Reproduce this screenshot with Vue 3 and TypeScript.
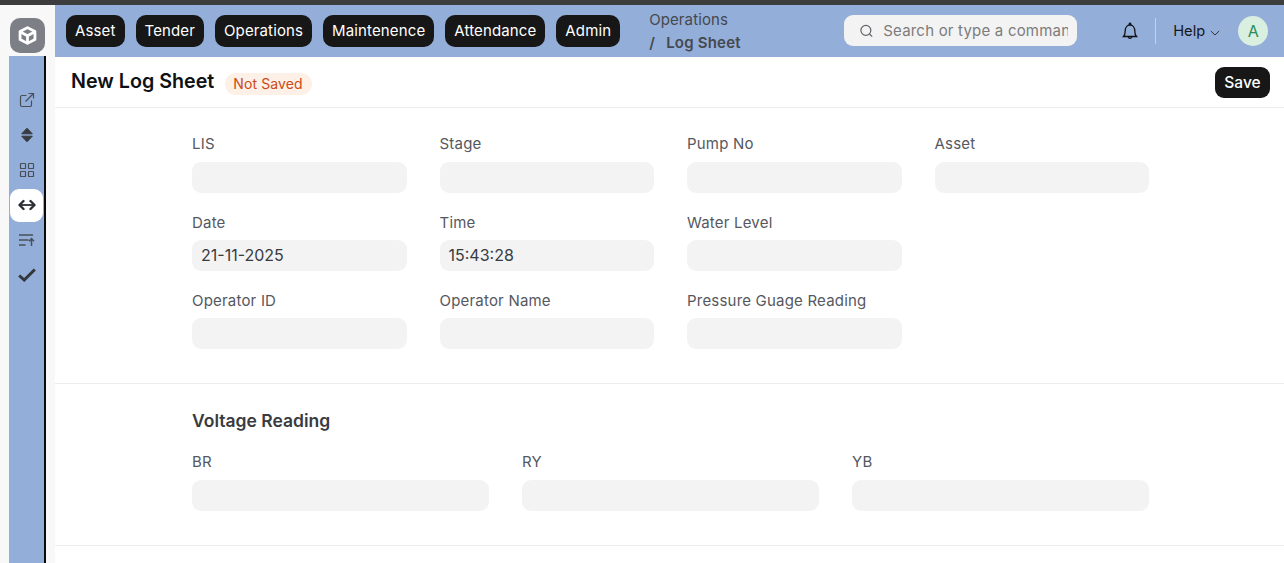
<script setup lang="ts">
interface Field { label: string; value?: string; empty?: boolean }
const menus: string[] = ['Asset', 'Tender', 'Operations', 'Maintenence', 'Attendance', 'Admin']
const rows: Field[] = [
  { label: 'LIS' }, { label: 'Stage' }, { label: 'Pump No' }, { label: 'Asset' },
  { label: 'Date', value: '21-11-2025' }, { label: 'Time', value: '15:43:28' }, { label: 'Water Level' }, { label: '', empty: true },
  { label: 'Operator ID' }, { label: 'Operator Name' }, { label: 'Pressure Guage Reading' }, { label: '', empty: true },
]
const volts: Field[] = [{ label: 'BR' }, { label: 'RY' }, { label: 'YB' }]
</script>

<template>
  <div class="page">
    <div class="topline"></div>
    <div class="shell">
      <aside class="rail">
        <div class="logo-wrap">
          <div class="logo">
            <svg width="21" height="21" viewBox="0 0 24 24" fill="none" stroke="#fff" stroke-width="3.200" stroke-linejoin="round">
              <path d="M12 3 20.500 7.500V16.500L12 21 3.500 16.500V7.500Z" />
              <path d="M4 8 12 12.300 20 8M12 12.300V20.500" />
            </svg>
          </div>
        </div>
        <div class="strip">
          <div class="strip-item">
            <svg width="16" height="16" viewBox="0 0 16 16" fill="none" stroke="#4a4f57" stroke-width="1.200">
              <path d="M12.500 8.500V13a1.500 1.500 0 0 1-1.500 1.500H3A1.500 1.500 0 0 1 1.500 13V5A1.500 1.500 0 0 1 3 3.500H7.500" />
              <path d="M6.500 9.500 14.500 1.500M9.500 1.500H14.500V6.500" />
            </svg>
          </div>
          <div class="strip-item">
            <svg width="14" height="16" viewBox="0 0 14 16" fill="#383b40" stroke="#383b40" stroke-width="1" stroke-linejoin="round">
              <path d="M7 1.200 12.300 6.800H1.700Z" />
              <path d="M7 14.800 1.700 9.200H12.300Z" />
            </svg>
          </div>
          <div class="strip-item">
            <svg width="16" height="16" viewBox="0 0 16 16" fill="none" stroke="#4a4f57" stroke-width="1.200">
              <rect x="1.500" y="1.500" width="5" height="5" rx=".6" />
              <rect x="9.500" y="1.500" width="5" height="5" rx=".6" />
              <rect x="1.500" y="9.500" width="5" height="5" rx=".6" />
              <rect x="9.500" y="9.500" width="5" height="5" rx=".6" />
            </svg>
          </div>
          <div class="strip-item active">
            <svg width="18" height="12" viewBox="0 0 18 12" fill="none" stroke="#2b2e33" stroke-linejoin="round">
              <path stroke-width="2.400" stroke-linecap="round" d="M5.500 2 1.500 6 5.500 10M12.500 2 16.500 6 12.500 10" />
              <path stroke-width="1.800" d="M2 6H16" />
            </svg>
          </div>
          <div class="strip-item">
            <svg width="16" height="14" viewBox="0 0 16 14" fill="none" stroke="#4a4f57" stroke-width="1.500">
              <path d="M0 2H14M0 7H9.500M0 12H6.500M12.500 13V6M10 8.200 12.500 5.600 15 8.200" />
            </svg>
          </div>
          <div class="strip-item">
            <svg width="18" height="14" viewBox="0 0 18 14" fill="none" stroke="#33363b" stroke-width="3">
              <path d="M1.200 7.500 6.200 12 16.800 1.500" />
            </svg>
          </div>
        </div>
      </aside>

      <div class="main">
        <header class="navbar">
          <nav class="menus">
            <button v-for="m in menus" :key="m" class="menu-btn">{{ m }}</button>
          </nav>
          <div class="crumbs">
            <div class="crumb-parent">Operations</div>
            <div class="crumb-current"><span class="slash">/</span><b>Log Sheet</b></div>
          </div>
          <div class="search">
            <svg width="16" height="16" viewBox="0 0 16 16" fill="none" stroke="#5f636a" stroke-width="1.300">
              <circle cx="7.300" cy="7.300" r="5.300" />
              <path d="M11.200 11.200 14 14" />
            </svg>
            <span class="search-text">Search or type a command</span>
          </div>
          <svg class="bell" width="20" height="20" viewBox="0 0 20 20" fill="none" stroke="#0f1114" stroke-width="1.300">
            <path d="M3.500 15.500c1.300-1.300 1.700-2.800 1.700-5.500C5.200 6.800 7 4 10 4s4.800 2.800 4.800 6c0 2.700.4 4.200 1.700 5.500Z" />
            <path d="M9.300 3.900V2.800a.7.7 0 0 1 1.400 0v1.100M8.300 15.800c.2 1 .9 1.600 1.700 1.600s1.500-.6 1.700-1.600" />
          </svg>
          <div class="divider"></div>
          <div class="help">
            <span>Help</span>
            <svg width="10" height="6" viewBox="0 0 10 6" fill="none" stroke="#33363b" stroke-width="1">
              <path d="M.8 1 5 5 9.200 1" />
            </svg>
          </div>
          <div class="avatar">A</div>
        </header>

        <div class="title-bar">
          <h1>New Log Sheet</h1>
          <span class="badge">Not Saved</span>
          <button class="save">Save</button>
        </div>

        <section class="section first">
          <div class="grid four">
            <div v-for="(f, i) in rows" :key="i" class="field">
              <template v-if="!f.empty">
                <label>{{ f.label }}</label>
                <div class="input">{{ f.value }}</div>
              </template>
            </div>
          </div>
        </section>

        <section class="section second">
          <h2>Voltage Reading</h2>
          <div class="grid three">
            <div v-for="f in volts" :key="f.label" class="field">
              <label>{{ f.label }}</label>
              <div class="input"></div>
            </div>
          </div>
        </section>
      </div>
    </div>
  </div>
</template>

<style>
html, body { margin: 0; overflow: hidden; background: #fff; }
</style>

<style scoped>
.page {
  width: 1284px;
  height: 563px;
  overflow: hidden;
  display: flex;
  flex-direction: column;
  font-family: Inter, "Liberation Sans", sans-serif;
  color: #383b40;
}
.topline { height: 5px; background: #3d3d3d; flex: none; }
.shell { display: flex; flex: 1; min-height: 0; }
.rail {
  width: 55px;
  flex: none;
  background: #f8f8f8;
  display: flex;
  flex-direction: column;
  box-sizing: border-box;
  padding-left: 9px;
}
.logo-wrap { height: 51px; flex: none; padding: 13px 0 0 1px; box-sizing: border-box; }
.logo {
  width: 35px;
  height: 35px;
  border-radius: 10px;
  background: #7c7f86;
  display: flex;
  align-items: center;
  justify-content: center;
}
.strip {
  width: 35px;
  flex: 1;
  background: #93aed9;
  border-right: 2px solid #0a0a0a;
  padding-top: 28px;
  display: flex;
  flex-direction: column;
  align-items: center;
  box-sizing: content-box;
}
.strip-item {
  width: 33px;
  height: 33px;
  margin-bottom: 2px;
  border-radius: 9px;
  display: flex;
  align-items: center;
  justify-content: center;
  flex: none;
}
.strip-item svg { margin-bottom: 2px; }
.strip-item.active svg { margin-bottom: 1px; }
.strip-item.active { background: #fff; }
.main { flex: 1; min-width: 0; background: #fff; }
.navbar {
  height: 52px;
  background: #93aed9;
  display: flex;
  align-items: center;
  padding-left: 11px;
  box-sizing: border-box;
}
.menus { display: flex; gap: 11px; flex: none; }
.menu-btn {
  height: 32px;
  border: 0;
  border-radius: 10px;
  background: #171717;
  color: #fff;
  font: 400 15px Inter, sans-serif;
  letter-spacing: .13px;
  padding: 0 9px 2px;
}
.crumbs { width: 195px; margin-left: 29px; flex: none; font-size: 15px; color: #45484e; line-height: 23px; }
.crumb-parent { letter-spacing: .1px; }
.crumb-current { display: flex; }
.slash { width: 17px; font-weight: 600; }
.crumb-current b { font-weight: 600; letter-spacing: .2px; }
.search {
  width: 233px;
  height: 31px;
  margin-top: -1px;
  flex: none;
  background: #f3f3f3;
  border-radius: 9px;
  display: flex;
  align-items: center;
  padding: 0 9px 0 15px;
  box-sizing: border-box;
  overflow: hidden;
}
.search-text {
  margin-left: 9px;
  font-size: 15px;
  letter-spacing: .2px;
  color: #7c7c7c;
  white-space: nowrap;
  overflow: hidden;
}
.bell { margin-left: 43px; flex: none; }
.divider { width: 1px; height: 26px; background: #c5d3ea; margin-left: 15px; flex: none; }
.help {
  margin-left: 17px;
  font-size: 14.700px;
  color: #15171a;
  display: flex;
  align-items: center;
  gap: 5px;
  flex: none;
}
.help svg { margin-top: 3px; }
.avatar {
  width: 30px;
  height: 30px;
  margin-left: 18px;
  margin-top: -1px;
  border-radius: 50%;
  background: #d9efdf;
  color: #2c8a5b;
  font-size: 16px;
  display: flex;
  align-items: center;
  justify-content: center;
  flex: none;
}
.title-bar {
  height: 51px;
  display: flex;
  align-items: center;
  padding: 0 14px 0 16px;
  border-bottom: 1px solid #ededed;
  box-sizing: border-box;
}
h1 { margin: -2px 0 0; font-size: 19.700px; font-weight: 600; color: #0f1114; }
.badge {
  margin-left: 11px;
  margin-top: 4px;
  height: 22px;
  padding: 0 9px 0 8px;
  border-radius: 11px;
  background: #fdf0e7;
  color: #cc4a16;
  font-size: 14px;
  letter-spacing: .1px;
  line-height: 22px;
}
.save {
  margin-left: auto;
  height: 31px;
  width: 55px;
  border: 0;
  border-radius: 9px;
  background: #171717;
  color: #fff;
  font: 500 15.500px Inter, sans-serif;
  padding: 0;
}
.section { border-bottom: 1px solid #ededed; box-sizing: border-box; padding: 0 135px 0 137px; }
.section.first { height: 276px; padding-top: 27.400px; }
.section.second { height: 162px; padding-top: 26px; }
h2 { margin: 0 0 21px; font-size: 17.500px; line-height: 22px; font-weight: 600; color: #383b40; }
.grid { display: grid; }
.four { grid-template-columns: repeat(4, 214.500px); column-gap: 33px; row-gap: 18.300px; }
.three { grid-template-columns: repeat(3, 297px); column-gap: 33px; }
.field { height: 60px; }
label { display: block; font-size: 15px; letter-spacing: .2px; line-height: 18px; color: #55585e; margin-bottom: 8.200px; }
.three label { margin-bottom: 9px; }
.input {
  height: 31px;
  border-radius: 9px;
  background: #f3f3f3;
  font-size: 16px;
  line-height: 31px;
  padding: 0 9px;
  color: #383b40;
}
</style>
